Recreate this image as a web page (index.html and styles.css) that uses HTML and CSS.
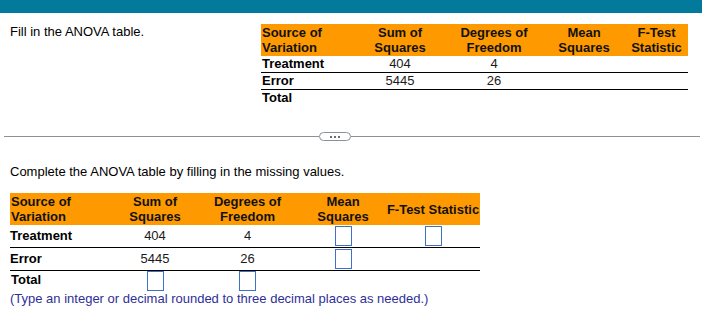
FILE: index.html
```html
<!DOCTYPE html>
<html>
<head>
<meta charset="utf-8">
<link rel="stylesheet" href="styles.css">
</head>
<body>
<div class="topbar"></div>
<div class="q1">
  <div class="prompt">Fill in the ANOVA table.</div>
  <table class="anova t1">
    <colgroup><col class="c1a"><col class="c1b"><col class="c1c"><col class="c1d"><col class="c1e"></colgroup>
    <thead>
      <tr><th class="left">Source of<br>Variation</th><th>Sum of<br>Squares</th><th>Degrees of<br>Freedom</th><th>Mean<br>Squares</th><th>F-Test<br>Statistic</th></tr>
    </thead>
    <tbody>
      <tr class="ruled"><td class="lbl">Treatment</td><td>404</td><td>4</td><td></td><td></td></tr>
      <tr class="ruled"><td class="lbl">Error</td><td>5445</td><td>26</td><td></td><td></td></tr>
      <tr><td class="lbl">Total</td><td></td><td></td><td></td><td></td></tr>
    </tbody>
  </table>
</div>
<div class="divider">
  <div class="line left-line"></div>
  <div class="more"><span></span><span></span><span></span></div>
  <div class="line right-line"></div>
</div>
<div class="q2">
  <div class="prompt2">Complete the ANOVA table by filling in the missing values.</div>
  <table class="anova t2">
    <colgroup><col class="c2a"><col class="c2b"><col class="c2c"><col class="c2d"><col class="c2e"></colgroup>
    <thead>
      <tr><th class="left">Source of<br>Variation</th><th>Sum of<br>Squares</th><th>Degrees of<br>Freedom</th><th>Mean<br>Squares</th><th>F-Test Statistic</th></tr>
    </thead>
    <tbody>
      <tr class="ruled tall"><td class="lbl">Treatment</td><td>404</td><td>4</td><td><span class="box"></span></td><td><span class="box"></span></td></tr>
      <tr class="ruled tall"><td class="lbl">Error</td><td>5445</td><td>26</td><td><span class="box"></span></td><td></td></tr>
      <tr class="total"><td class="lbl">Total</td><td><span class="box"></span></td><td><span class="box"></span></td><td></td><td></td></tr>
    </tbody>
  </table>
  <div class="note">(Type an integer or decimal rounded to three decimal places as needed.)</div>
</div>
</body>
</html>
```
FILE: styles.css
```css
html, body {
  margin: 0;
  padding: 0;
  background: #ffffff;
}
body {
  font-family: "Liberation Sans", Arial, sans-serif;
  font-size: 13px;
  line-height: 15px;
  color: #000;
}
.topbar {
  height: 13px;
  background: #03799b;
}
.q1 {
  display: flex;
  padding: 11px 0 0 10px;
}
.prompt {
  width: 251px;
  flex: none;
}
.anova {
  border-collapse: collapse;
  table-layout: fixed;
}
.anova th {
  background: #fe9a00;
  font-weight: bold;
  text-align: center;
  padding: 1px 0;
  line-height: 15px;
  color: #111;
}
.anova th.left {
  text-align: left;
  padding-left: 1px;
}
.anova td {
  padding: 0;
  line-height: 16px;
  text-align: center;
  color: #1a1a1a;
}
.anova td.lbl {
  text-align: left;
  font-weight: bold;
  color: #000;
  padding-left: 1px;
}
.anova tr.ruled td {
  border-bottom: 1px solid #000;
}
.t1 { width: 427px; }
.c1a { width: 94px; }
.c1b { width: 90px; }
.c1c { width: 98px; }
.c1d { width: 82px; }
.c1e { width: 63px; }

.divider {
  display: flex;
  align-items: center;
  margin-top: 26px;
  height: 9px;
  padding: 0 2px 0 4px;
}
.line {
  height: 1px;
  background: #8c9099;
}
.left-line { width: 315px; flex: none; }
.right-line { flex: 1; }
.more {
  box-sizing: border-box;
  width: 32px;
  height: 9px;
  border: 1px solid #8c9099;
  border-radius: 5px;
  background: #fff;
  display: flex;
  align-items: center;
  justify-content: center;
  gap: 2px;
}
.more span {
  width: 2px;
  height: 2px;
  background: #6a6f78;
}
.q2 {
  padding-left: 10px;
  margin-top: 23px;
}
.prompt2 {
  margin-bottom: 14px;
}
.t2 { width: 470px; }
.c2a { width: 105px; }
.c2b { width: 80px; }
.c2c { width: 105px; }
.c2d { width: 86px; }
.c2e { width: 94px; }
.t2 tr.tall td {
  padding: 1px 0;
  height: 20px;
  vertical-align: middle;
}
.t2 tr.total td {
  vertical-align: top;
  padding-top: 1px;
}
.t2 tr.total td .box {
  margin-top: -1px;
}
.box {
  display: inline-block;
  box-sizing: border-box;
  width: 17px;
  height: 20px;
  border: 1px solid #3e71c9;
  vertical-align: middle;
}
.t2 tr.total .box {
  vertical-align: top;
}
.note {
  color: #2f2f98;
}
```
